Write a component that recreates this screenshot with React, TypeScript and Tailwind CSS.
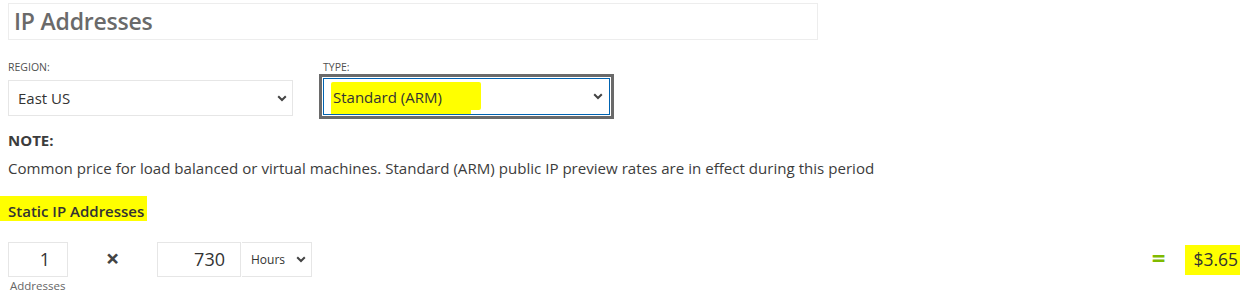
import React from 'react';

const Chevron: React.FC<{ className?: string }> = ({ className }) => (
  <svg width="10" height="7" viewBox="0 0 10 7" className={className}>
    <path d="M1.2 1.2 5 5 8.8 1.2" fill="none" stroke="#444" strokeWidth="2" />
  </svg>
);

const App: React.FC = () => {
  return (
    <div className="w-[1253px] h-[301px] bg-white overflow-hidden text-[#404040]" style={{ fontFamily: '"Open Sans", "Noto Sans", sans-serif' }}>
      <div className="pl-2">
        {/* title */}
        <div className="pt-[3px]">
          <div className="w-[810px] h-[37px] border border-[#ededed] flex items-center pl-[5px]">
            <h1 className="text-[23px] font-semibold text-[#6a6a6a] leading-none tracking-[-0.2px]">IP Addresses</h1>
          </div>
        </div>

        {/* region / type */}
        <div className="flex gap-[30px] mt-[20px]">
          <div className="flex flex-col">
            <label className="text-[10.5px] uppercase text-[#505050] leading-[14px] h-[20px]">Region:</label>
            <div className="w-[285px] h-[36px] border border-[#e6e6e6] flex items-center justify-between pl-[9px] pr-[5px]">
              <span className="text-[15px] text-[#333]">East US</span>
              <Chevron />
            </div>
          </div>
          <div className="flex flex-col">
            <label className="text-[10.5px] uppercase text-[#505050] leading-[14px] h-[19px]">Type:</label>
            <div className="relative w-[287px] h-[37px] mt-[-1px] border border-[#0063b1] outline-3 outline-[#6a6a6a] outline-offset-1 flex items-center justify-between pl-[9px] pr-[6px]">
              <div className="absolute left-[7px] top-[3px] w-[150px] h-[28px] bg-[#ffff00] rounded-[2px]" />
              <div className="absolute left-[7px] top-[20px] w-[140px] h-[15px] bg-[#ffff00]" />
              <span className="relative text-[15px] text-[#333] mt-[2px]">Standard (ARM)</span>
              <Chevron />
            </div>
          </div>
        </div>

        {/* note */}
        <div className="mt-[14px]">
          <div className="text-[15px] font-bold text-[#3c3c3c] leading-[20px]">NOTE:</div>
          <p className="text-[15.1px] text-[#3c3c3c] leading-[20px] mt-[8px]">
            Common price for load balanced or virtual machines. Standard (ARM) public IP preview rates are in effect during this period
          </p>
        </div>

        {/* static IP */}
        <div className="mt-[18px]">
          <span className="inline-flex items-end h-[25px] -ml-2 pl-2 pr-[3px] bg-[#ffff00] text-[15px] font-semibold text-[#333] leading-[20px]">
            Static IP Addresses
          </span>
        </div>

        {/* calculation row */}
        <div className="flex items-start mt-[19px]">
          <div className="flex flex-col items-start">
            <div className="w-[60px] h-[35px] border border-[#e6e6e6] flex items-center justify-end pr-[17px]">
              <span className="text-[18px] text-[#333]">1</span>
            </div>
            <span className="text-[11.5px] text-[#666] mt-[1px] ml-[2px] leading-[16px]">Addresses</span>
          </div>
          <div className="w-[89px] h-[35px] flex items-center justify-center">
            <span className="text-[24px] font-bold text-[#444] leading-none -mt-[3px]">×</span>
          </div>
          <div className="w-[84px] h-[35px] border border-[#e6e6e6] flex items-center justify-end pr-[15px]">
            <span className="text-[18px] text-[#333]">730</span>
          </div>
          <div className="w-[70px] h-[35px] border border-[#e6e6e6] border-l-0 ml-[1px] flex items-center justify-between pl-[9px] pr-[5px]">
            <span className="text-[12px] text-[#333]">Hours</span>
            <Chevron />
          </div>
          <div className="flex-1" />
          <div className="h-[35px] flex items-center">
            <span className="text-[24px] font-bold text-[#7fba00] leading-none -mt-[4px]">=</span>
          </div>
          <div className="h-[35px] flex items-center ml-[20px] mr-[13px]">
            <span className="bg-[#ffff00] pl-[8px] pr-[2px] pt-[1px] pb-[3px] text-[17.5px] text-[#333] leading-[26px]">$3.65</span>
          </div>
        </div>
      </div>
    </div>
  );
};

export default App;
